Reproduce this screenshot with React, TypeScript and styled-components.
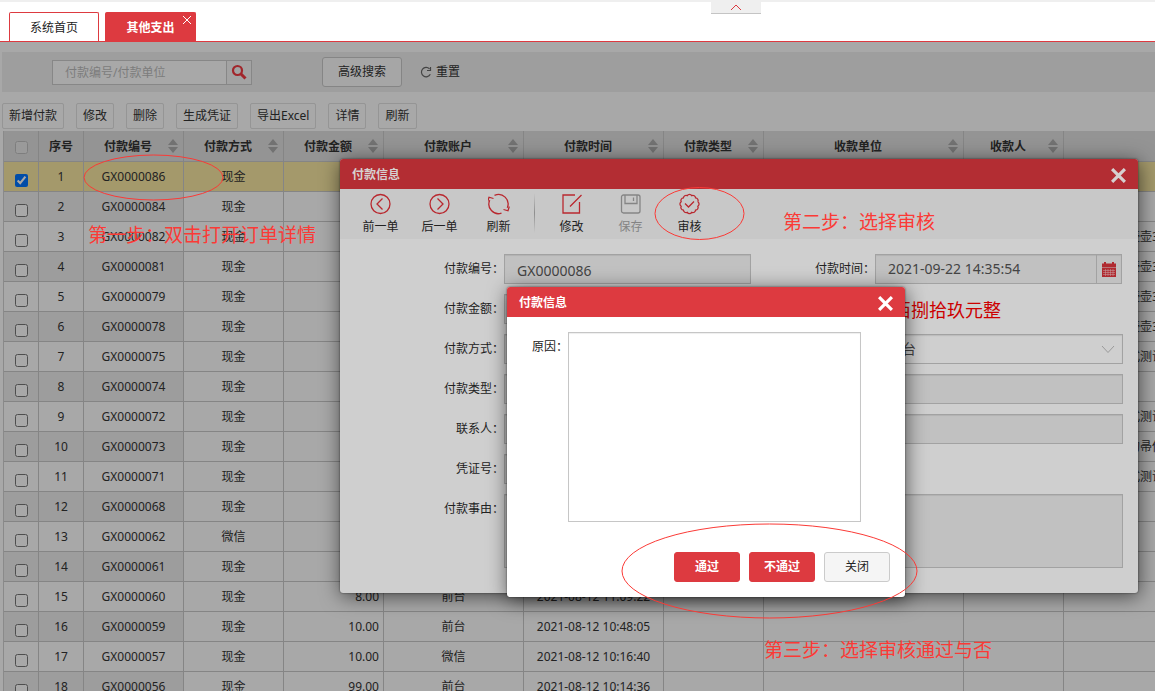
import React from "react";
import styled, { createGlobalStyle } from "styled-components";

const RED = "#dd3a40";
const MARK = "#fb3a36";

const Global = createGlobalStyle`
  * { box-sizing: border-box; }
  body {
    margin: 0;
    overflow: hidden;
    background: #fff;
    color: #222;
    font: 12px/16px "Noto Sans", "Noto Sans CJK SC", sans-serif;
  }
  table { font: inherit; color: inherit; }
  button, input, textarea, select { font: inherit; color: inherit; }
  button { cursor: pointer; }
`;

const Page = styled.div`
  position: relative;
  display: flex;
  flex-direction: column;
  height: 100vh;
  overflow: hidden;
`;

const TabBar = styled.nav`
  flex: none;
  display: flex;
  align-items: flex-end;
  gap: 6px;
  height: 42px;
  padding-left: 9px;
  border-top: 2px solid #efefef;
  border-bottom: 1px solid ${RED};
`;

const Tab = styled.button<{ $active?: boolean }>`
  position: relative;
  width: ${(p) => (p.$active ? 91 : 90)}px;
  height: 29px;
  padding: 2px 0 0;
  border: 1px solid ${RED};
  border-bottom: 0;
  border-radius: 2px 2px 0 0;
  background: ${(p) => (p.$active ? RED : "#fff")};
  color: ${(p) => (p.$active ? "#fff" : "#222")};
  font-weight: ${(p) => (p.$active ? 700 : 400)};
`;

const TabClose = styled.svg`
  position: absolute;
  top: 2px;
  right: 3px;
`;

const Collapse = styled.button`
  position: absolute;
  top: 0;
  left: 711px;
  display: flex;
  align-items: center;
  justify-content: center;
  width: 50px;
  height: 14px;
  padding: 2px 0 0;
  border: 0;
  border-bottom: 1px solid #c4c4c4;
  background: #efefef;
`;

const Workspace = styled.main`
  flex: 1;
  min-height: 0;
  overflow: hidden;
  padding: 10px 0 0 2px;
  background: #a8a8a8;
`;

const SearchBar = styled.form`
  display: flex;
  align-items: center;
  height: 40px;
  padding-left: 50px;
  background: #9e9e9e;
`;

const SearchBox = styled.div`
  display: flex;
  width: 200px;
  height: 25px;
  margin-right: 70px;
  border: 1px solid #878787;
  background: #a8a8a8;
`;

const SearchInput = styled.input`
  flex: 1;
  min-width: 0;
  padding: 2px 12px 0;
  border: 0;
  background: none;
  outline: none;
  &::placeholder { color: #7c7c7c; opacity: 1; }
`;

const SearchButton = styled.button`
  display: flex;
  align-items: center;
  justify-content: center;
  width: 25px;
  padding: 0;
  border: 0;
  border-left: 1px solid #878787;
  background: #a3a3a3;
`;

const AdvancedButton = styled.button`
  width: 80px;
  height: 30px;
  padding: 0;
  border: 1px solid #858585;
  border-radius: 3px;
  background: #a6a6a6;
`;

const ResetButton = styled.button`
  display: flex;
  align-items: center;
  gap: 4px;
  margin-left: 18px;
  padding: 0;
  border: 0;
  background: none;
`;

const ActionBar = styled.div`
  display: flex;
  gap: 12px;
  padding: 11px 0 2px;
`;

const ActionButton = styled.button`
  height: 26px;
  padding: 0 6px;
  border: 1px solid #959595;
  border-radius: 2px;
  background: #a8a8a8;
`;

const Grid = styled.table`
  width: 1462px;
  margin-left: 1px;
  border-collapse: separate;
  border-spacing: 0;
  border-left: 1px solid #8a8a8a;
  table-layout: fixed;
`;

const HeadCell = styled.th`
  position: relative;
  height: 31px;
  padding: 0;
  border-right: 1px solid #858585;
  border-bottom: 1px solid #858585;
  background: #949494;
  font-weight: 700;
`;

const HeadInner = styled.div<{ $sortable: boolean }>`
  display: flex;
  align-items: center;
  justify-content: center;
  padding-top: 2px;
  padding-right: ${(p) => (p.$sortable ? 11 : 0)}px;
`;

const SortMark = styled.svg`
  position: absolute;
  top: 8px;
  right: 5px;
`;

const Row = styled.tr<{ $selected: boolean }>`
  background: ${(p) => (p.$selected ? "#a4996b" : "#a8a8a8")};
`;

const Cell = styled.td<{ $shaded?: boolean; $align?: "left" | "right" }>`
  height: 30px;
  padding: 0 4px;
  overflow: hidden;
  border-right: 1px solid #858585;
  border-bottom: 1px solid #858585;
  background: ${(p) => (p.$shaded ? "#9d9d9d" : "transparent")};
  text-align: ${(p) => p.$align ?? "center"};
  white-space: nowrap;
`;

const Check = styled.input`
  display: block;
  width: 13px;
  height: 13px;
  margin: 8px auto 0 7px;
  filter: brightness(0.66);
`;

const HeadCheck = styled(Check)`
  margin: 2px auto 0;
  opacity: 0.3;
`;

const Dialog = styled.section<{ $front?: boolean }>`
  position: absolute;
  display: flex;
  flex-direction: column;
  overflow: hidden;
  border-radius: 3px;
  background: ${(p) => (p.$front ? "#fff" : "#cfcfcf")};
  box-shadow: 1px 3px 20px rgba(0, 0, 0, 0.6), 0 0 2px rgba(0, 0, 0, 0.6);
`;

const PaymentDialog = styled(Dialog)`
  top: 159px;
  left: 340px;
  right: 17px;
  height: 434px;
`;

const ReviewDialog = styled(Dialog)`
  top: 287px;
  left: 507px;
  width: 398px;
  height: 310px;
`;

const DialogTitle = styled.header<{ $front?: boolean }>`
  flex: none;
  display: flex;
  align-items: center;
  justify-content: space-between;
  height: 30px;
  padding: 0 12px;
  background: ${(p) => (p.$front ? RED : "#b32d33")};
  color: ${(p) => (p.$front ? "#fff" : "#d6d0d0")};
`;

const TitleText = styled.h2`
  margin: 0;
  padding-top: 2px;
  font-size: 12px;
  line-height: 16px;
`;

const CloseButton = styled.button`
  display: flex;
  padding: 2px 0 0;
  border: 0;
  background: none;
`;

const ToolStrip = styled.div`
  flex: none;
  display: flex;
  height: 50px;
  padding-left: 11px;
  background: #c8c8c8;
`;

const Tool = styled.button`
  display: flex;
  flex-direction: column;
  align-items: center;
  gap: 4px;
  width: 59px;
  padding: 4px 0 0;
  border: 0;
  background: none;
  color: #222;
  &:disabled { color: #848484; }
`;

const ToolDivider = styled.div`
  width: 1px;
  height: 40px;
  margin: 4px 7px 0 6px;
  background: linear-gradient(#c8c8c8, #8e8e8e, #c8c8c8);
`;

const Form = styled.form`
  display: grid;
  grid-template-columns: 164px 247px 124px minmax(0, 1fr);
  grid-auto-rows: 30px;
  row-gap: 10px;
  padding: 15px 15px 0 0;
`;

const FieldLabel = styled.label`
  padding-top: 7px;
  text-align: right;
`;

const Field = styled.input<{ $wide?: boolean }>`
  grid-column: ${(p) => (p.$wide ? "2 / 5" : "auto")};
  min-width: 0;
  width: 100%;
  padding: 4px 12px 0;
  border: 1px solid #a2a2a2;
  border-radius: 0;
  background: #c1c1c1;
  box-shadow: inset 0 1px 1px #b2b2b2;
  color: #444;
  font-size: 14px;
  outline: none;
`;

const DateField = styled.div`
  display: flex;
  margin-right: 1px;
  border: 1px solid #a2a2a2;
  background: #c1c1c1;
  box-shadow: inset 0 1px 1px #b2b2b2;
`;

const DateInput = styled.input`
  flex: 1;
  min-width: 0;
  padding: 0 12px;
  border: 0;
  background: none;
  color: #444;
  font-size: 14px;
  outline: none;
`;

const DateButton = styled.button`
  flex: none;
  display: flex;
  align-items: center;
  justify-content: center;
  width: 25px;
  padding: 0;
  border: 0;
  border-left: 1px solid #a2a2a2;
  background: none;
`;

const AmountWords = styled.output`
  grid-column: 3 / 5;
  padding-left: 142px;
  color: #cc0000;
  font-size: 18px;
  line-height: 32px;
`;

const SelectWrap = styled.div`
  position: relative;
  display: flex;
`;

const Select = styled.select`
  appearance: none;
  width: 100%;
  padding: 0 12px;
  border: 1px solid #a2a2a2;
  border-radius: 0;
  background: #cfcfcf;
  box-shadow: inset 0 1px 1px #bbb;
  color: #444;
  font-size: 14px;
`;

const SelectArrow = styled.svg`
  position: absolute;
  top: 11px;
  right: 8px;
  pointer-events: none;
`;

const Memo = styled.textarea`
  grid-column: 2 / 5;
  height: 74px;
  border: 1px solid #a2a2a2;
  background: #c1c1c1;
  box-shadow: inset 0 1px 1px #b2b2b2;
  resize: none;
`;

const ReasonRow = styled.div`
  display: flex;
  padding: 15px 44px 0 25px;
`;

const ReasonLabel = styled.label`
  padding-top: 7px;
`;

const ReasonText = styled.textarea`
  flex: 1;
  height: 190px;
  border: 1px solid #c6c6c6;
  box-shadow: inset 0 1px 1px #eee;
  resize: none;
`;

const ReviewActions = styled.footer`
  display: flex;
  justify-content: flex-end;
  gap: 9px;
  padding: 30px 15px 0;
`;

const ReviewButton = styled.button<{ $primary?: boolean }>`
  width: 66px;
  height: 30px;
  padding: 0;
  border: 1px solid ${(p) => (p.$primary ? RED : "#cbcbcb")};
  border-radius: 3px;
  background: ${(p) => (p.$primary ? RED : "#f5f5f5")};
  color: ${(p) => (p.$primary ? "#fff" : "#222")};
  font-weight: ${(p) => (p.$primary ? 700 : 400)};
`;

const Rings = styled.svg`
  position: absolute;
  top: 0;
  left: 0;
  pointer-events: none;
`;

const Note = styled.p<{ $x: number; $y: number }>`
  position: absolute;
  top: ${(p) => p.$y}px;
  left: ${(p) => p.$x}px;
  margin: 0;
  color: ${MARK};
  font-size: 19px;
  line-height: 28px;
  white-space: nowrap;
  pointer-events: none;
`;

const columns = [
  { title: "序号", width: 45 },
  { title: "付款编号", width: 100 },
  { title: "付款方式", width: 100 },
  { title: "付款金额", width: 100 },
  { title: "付款账户", width: 140 },
  { title: "付款时间", width: 140 },
  { title: "付款类型", width: 100 },
  { title: "收款单位", width: 200 },
  { title: "收款人", width: 100 },
];

type Payment = {
  code: string;
  method?: string;
  amount?: string;
  account?: string;
  time?: string;
  note?: string;
};

const payments: Payment[] = [
  { code: "GX0000086" },
  { code: "GX0000084" },
  { code: "GX0000082", note: "采购紫砂茶壶壶3件" },
  { code: "GX0000081", note: "采购紫砂茶壶壶3件" },
  { code: "GX0000079", note: "采购紫砂茶壶壶3件" },
  { code: "GX0000078", note: "采购紫砂茶壶壶3件" },
  { code: "GX0000075", note: "付款审核测式测试" },
  { code: "GX0000074" },
  { code: "GX0000072", note: "付款审核测式测试" },
  { code: "GX0000073", note: "付款采购用的帚借" },
  { code: "GX0000071", note: "付款审核测式测试" },
  { code: "GX0000068" },
  { code: "GX0000062", method: "微信" },
  { code: "GX0000061" },
  { code: "GX0000060", amount: "8.00", account: "前台", time: "2021-08-12 11:09:22" },
  { code: "GX0000059", amount: "10.00", account: "前台", time: "2021-08-12 10:48:05" },
  { code: "GX0000057", amount: "10.00", account: "微信", time: "2021-08-12 10:16:40" },
  { code: "GX0000056", amount: "99.00", account: "前台", time: "2021-08-12 10:14:36" },
];

const actions = ["新增付款", "修改", "删除", "生成凭证", "导出Excel", "详情", "刷新"];

const Cross = ({ size, width }: { size: number; width: number }) => (
  <svg width={size} height={size} viewBox="0 0 14 14" fill="none" stroke="currentColor" strokeWidth={width}>
    <path d="M1 1 13 13M13 1 1 13" />
  </svg>
);

const ToolIcon = ({ children, color = "#b9282f" }: { children: React.ReactNode; color?: string }) => (
  <svg width="22" height="22" viewBox="0 0 22 22" fill="none" stroke={color} strokeWidth="1.3">
    {children}
  </svg>
);

const scallop = Array.from({ length: 12 }, (_, i) => {
  const point = (k: number) => {
    const a = (k * Math.PI) / 6 - Math.PI / 12;
    return `${(10.5 + 8.6 * Math.cos(a)).toFixed(2)} ${(11 + 8.6 * Math.sin(a)).toFixed(2)}`;
  };
  return `${i === 0 ? `M${point(0)}` : ""}A2.6 2.6 0 0 1 ${point(i + 1)}`;
}).join("");

const icons = {
  prev: (
    <ToolIcon>
      <circle cx="10.5" cy="11" r="9.5" />
      <path d="M12.5 5.5 7 11l5.5 5.5" />
    </ToolIcon>
  ),
  next: (
    <ToolIcon>
      <circle cx="10.5" cy="11" r="9.5" />
      <path d="M8.5 5.5 14 11l-5.5 5.5" />
    </ToolIcon>
  ),
  refresh: (
    <ToolIcon>
      <path d="M6.5 2.4A9.5 9.5 0 0 1 19.3 14.7M13.5 20.1A9.5 9.5 0 0 1 1.7 7.3" />
      <path d="M15.500 16.500l4.500 1.300 1.300-4.300M5.500 5.500 1 4.200-.300 8.500" />
    </ToolIcon>
  ),
  edit: (
    <ToolIcon>
      <path d="M14 2H2v18h16.500V9M9 13.500 20.500 2" />
    </ToolIcon>
  ),
  save: (
    <ToolIcon color="#858585">
      <rect x="1.500" y="2" width="18.500" height="18" rx="2" />
      <path d="M5 2v8.500h12V2M13.500 4.500v3.500" />
    </ToolIcon>
  ),
  review: (
    <ToolIcon>
      <path d={scallop} />
      <path d="M6 10.500 9.500 14l5.500-5.500" />
    </ToolIcon>
  ),
};

export default function App() {
  return (
    <Page>
      <Global />
      <TabBar>
        <Tab>系统首页</Tab>
        <Tab $active>
          其他支出
          <TabClose width="10" height="10" viewBox="0 0 10 10" stroke="#fff" fill="none">
            <path d="M1 1 9 9M9 1 1 9" />
          </TabClose>
        </Tab>
        <Collapse aria-label="收起">
          <svg width="12" height="7" viewBox="0 0 12 7" fill="none" stroke={RED}>
            <path d="M1 6 6 1l5 5" />
          </svg>
        </Collapse>
      </TabBar>

      <Workspace>
        <SearchBar>
          <SearchBox>
            <SearchInput aria-label="付款编号/付款单位" placeholder="付款编号/付款单位" />
            <SearchButton type="button" aria-label="搜索">
              <svg width="16" height="16" viewBox="0 0 16 16" fill="none" stroke="#a1262b">
                <circle cx="6.500" cy="6.500" r="4.500" strokeWidth="2.200" />
                <path d="m10 10 4.500 4.500" strokeWidth="3" />
              </svg>
            </SearchButton>
          </SearchBox>
          <AdvancedButton type="button">高级搜索</AdvancedButton>
          <ResetButton type="button">
            <svg width="12" height="12" viewBox="0 0 12 12" fill="none" stroke="#444" strokeWidth="1.2">
              <path d="M10.300 8.300A4.700 4.700 0 1 1 9.500 2.800M10.500 1v3.500H7" />
            </svg>
            重置
          </ResetButton>
        </SearchBar>

        <ActionBar>
          {actions.map((name) => (
            <ActionButton key={name}>{name}</ActionButton>
          ))}
        </ActionBar>

        <Grid>
          <colgroup>
            <col style={{ width: 35 }} />
            {columns.map((c) => (
              <col key={c.title} style={{ width: c.width }} />
            ))}
            <col />
          </colgroup>
          <thead>
            <tr>
              <HeadCell>
                <HeadCheck type="checkbox" aria-label="全选" />
              </HeadCell>
              {columns.map((c, i) => (
                <HeadCell key={c.title}>
                  <HeadInner $sortable={i > 0}>{c.title}</HeadInner>
                  {i > 0 && (
                    <SortMark width="10" height="14" viewBox="0 0 10 14" fill="#727272">
                      <path d="M0 6 5 0l5 6zM0 8h10l-5 6z" />
                    </SortMark>
                  )}
                </HeadCell>
              ))}
              <HeadCell />
            </tr>
          </thead>
          <tbody>
            {payments.map((p, i) => {
              const shaded = i % 2 === 1;
              return (
                <Row key={p.code} $selected={i === 0}>
                  <Cell $shaded={shaded}>
                    <Check type="checkbox" defaultChecked={i === 0} aria-label={p.code} />
                  </Cell>
                  <Cell $shaded={shaded}>{i + 1}</Cell>
                  <Cell $shaded={shaded}>{p.code}</Cell>
                  <Cell>{p.method ?? "现金"}</Cell>
                  <Cell $align="right">{p.amount}</Cell>
                  <Cell>{p.account}</Cell>
                  <Cell>{p.time}</Cell>
                  <Cell />
                  <Cell />
                  <Cell />
                  <Cell $align="left">{p.note}</Cell>
                </Row>
              );
            })}
          </tbody>
        </Grid>
      </Workspace>

      <PaymentDialog role="dialog" aria-label="付款信息">
        <DialogTitle>
          <TitleText>付款信息</TitleText>
          <CloseButton aria-label="关闭">
            <Cross size={15} width={3} />
          </CloseButton>
        </DialogTitle>
        <ToolStrip>
          <Tool>{icons.prev}前一单</Tool>
          <Tool>{icons.next}后一单</Tool>
          <Tool>{icons.refresh}刷新</Tool>
          <ToolDivider />
          <Tool>{icons.edit}修改</Tool>
          <Tool disabled>{icons.save}保存</Tool>
          <Tool>{icons.review}审核</Tool>
        </ToolStrip>
        <Form>
          <FieldLabel htmlFor="code">付款编号：</FieldLabel>
          <Field id="code" readOnly defaultValue="GX0000086" />
          <FieldLabel htmlFor="time">付款时间：</FieldLabel>
          <DateField>
            <DateInput id="time" readOnly defaultValue="2021-09-22 14:35:54" />
            <DateButton type="button" aria-label="选择日期">
              <svg width="14" height="15" viewBox="0 0 14 15">
                <path d="M0 1.500h2V0h2v1.500h6V0h2v1.500h2V5H0zM0 5.500h14V15H0z" fill="#b02a30" />
                <path d="M1 8.500h12M1 10.500h12M1 12.500h12M3.500 7v7M6 7v7M8.500 7v7M11 7v7" stroke="#c9a4a6" strokeWidth=".5" />
              </svg>
            </DateButton>
          </DateField>

          <FieldLabel htmlFor="amount">付款金额：</FieldLabel>
          <Field id="amount" readOnly />
          <AmountWords>佰捌拾玖元整</AmountWords>

          <FieldLabel htmlFor="method">付款方式：</FieldLabel>
          <Field id="method" readOnly />
          <FieldLabel htmlFor="account">付款账户：</FieldLabel>
          <SelectWrap>
            <Select id="account">
              <option>前台</option>
            </Select>
            <SelectArrow width="14" height="9" viewBox="0 0 14 9" fill="none" stroke="#9a9a9a">
              <path d="m1 1 6 6.500L13 1" />
            </SelectArrow>
          </SelectWrap>

          <FieldLabel htmlFor="type">付款类型：</FieldLabel>
          <Field id="type" readOnly $wide />
          <FieldLabel htmlFor="contact">联系人：</FieldLabel>
          <Field id="contact" readOnly $wide />
          <FieldLabel htmlFor="voucher">凭证号：</FieldLabel>
          <Field id="voucher" readOnly />
          <span />
          <span />
          <FieldLabel htmlFor="memo">付款事由：</FieldLabel>
          <Memo id="memo" readOnly />
        </Form>
      </PaymentDialog>

      <ReviewDialog $front role="dialog" aria-label="付款信息">
        <DialogTitle $front>
          <TitleText>付款信息</TitleText>
          <CloseButton aria-label="关闭">
            <Cross size={15} width={3} />
          </CloseButton>
        </DialogTitle>
        <ReasonRow>
          <ReasonLabel htmlFor="reason">原因：</ReasonLabel>
          <ReasonText id="reason" />
        </ReasonRow>
        <ReviewActions>
          <ReviewButton $primary>通过</ReviewButton>
          <ReviewButton $primary>不通过</ReviewButton>
          <ReviewButton>关闭</ReviewButton>
        </ReviewActions>
      </ReviewDialog>

      <Rings width="1155" height="691" viewBox="0 0 1155 691" fill="none" stroke={MARK}>
        <ellipse cx="153.500" cy="177.500" rx="69.500" ry="22.500" />
        <ellipse cx="699.500" cy="213.500" rx="44.500" ry="26" />
        <ellipse cx="769.500" cy="571" rx="147.500" ry="47" />
      </Rings>
      <Note $x={88} $y={221}>第一步：双击打开订单详情</Note>
      <Note $x={783} $y={208}>第二步：选择审核</Note>
      <Note $x={764} $y={636}>第三步：选择审核通过与否</Note>
    </Page>
  );
}
